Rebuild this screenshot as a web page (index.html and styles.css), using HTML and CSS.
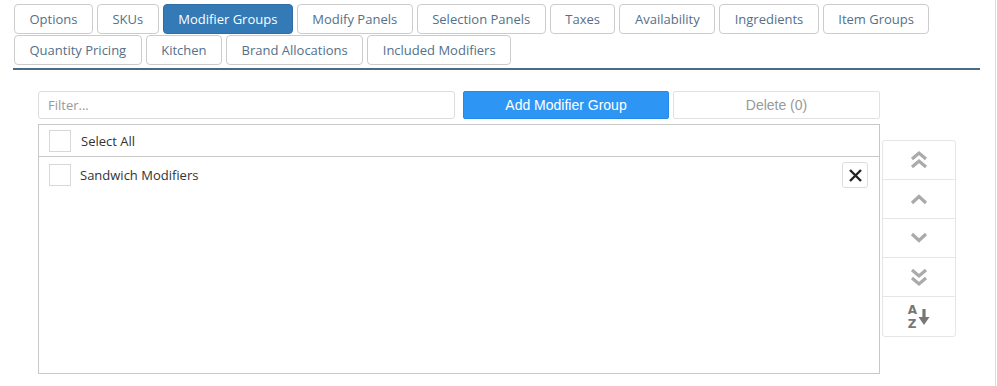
FILE: index.html
```html
<!DOCTYPE html>
<html lang="en">
<head>
	<meta charset="UTF-8">
	<title>Item - Modifier Groups</title>
	<link rel="stylesheet" href="styles.css">
</head>
<body>

<div class="page">
	<!-- tabs -->
	<div class="tabs">
		<a class="tab">Options</a>
		<a class="tab">SKUs</a>
		<a class="tab current">Modifier Groups</a>
		<a class="tab">Modify Panels</a>
		<a class="tab">Selection Panels</a>
		<a class="tab">Taxes</a>
		<a class="tab">Availability</a>
		<a class="tab">Ingredients</a>
		<a class="tab">Item Groups</a>
		<a class="tab">Quantity Pricing</a>
		<a class="tab">Kitchen</a>
		<a class="tab">Brand Allocations</a>
		<a class="tab">Included Modifiers</a>
	</div>
	<div class="tab-line"></div>

	<div class="panel">
		<div class="toolbar">
			<input class="filter" type="text" placeholder="Filter...">
			<button class="btn btn-add">Add Modifier Group</button>
			<button class="btn btn-delete">Delete (0)</button>
		</div>

		<div class="list-wrap">
			<div class="list">
				<div class="row row-head">
					<span class="check"></span>
					<span class="label">Select All</span>
				</div>
				<div class="row">
					<span class="check"></span>
					<span class="label">Sandwich Modifiers</span>
					<span class="remove">
						<svg width="15" height="15" viewBox="0 0 15 15"><path d="M2 2 L13 13 M13 2 L2 13" stroke="#222" stroke-width="2.4" fill="none"/></svg>
					</span>
				</div>
			</div>

			<div class="order">
				<div class="order-btn">
					<svg width="20" height="20" viewBox="0 0 20 20"><path d="M3 9 L10 3 L17 9 M3 17 L10 11 L17 17" stroke="#aaa" stroke-width="3.2" fill="none"/></svg>
				</div>
				<div class="order-btn">
					<svg width="20" height="12" viewBox="0 0 20 12"><path d="M3 10 L10 3.5 L17 10" stroke="#aaa" stroke-width="3.2" fill="none"/></svg>
				</div>
				<div class="order-btn">
					<svg width="20" height="12" viewBox="0 0 20 12"><path d="M3 2 L10 8.5 L17 2" stroke="#aaa" stroke-width="3.2" fill="none"/></svg>
				</div>
				<div class="order-btn">
					<svg width="20" height="20" viewBox="0 0 20 20"><path d="M3 3 L10 9 L17 3 M3 11 L10 17 L17 11" stroke="#aaa" stroke-width="3.2" fill="none"/></svg>
				</div>
				<div class="order-btn sort">
					<span class="az"><span>A</span><span>Z</span></span>
					<svg width="12" height="18" viewBox="0 0 12 18"><path d="M6 1 L6 12" stroke="#777" stroke-width="3.2" fill="none"/><path d="M0.5 9 L11.5 9 L6 17 Z" fill="#777"/></svg>
				</div>
			</div>
		</div>
	</div>
</div>

</body>
</html>
```

FILE: styles.css
```css
*{margin: 0;padding: 0;box-sizing: border-box;}
body{
	background: #fff;
	font-family: "Open Sans", "Noto Sans", sans-serif;
	font-size: 13px;
	color: #333;
}
.page{
	width: 996px;
	height: 386px;
	border-right: 1px solid #ddd;
	padding-top: 4px;
}
/*标签*/
.tabs{
	display: flex;
	flex-wrap: wrap;
	gap: 1px 4px;
	padding-left: 14px;
	width: 960px;
}
.tab{
	display: block;
	height: 30px;
	line-height: 28px;
	padding: 0 14.5px;
	border: 1px solid #ccc;
	border-radius: 4px;
	color: #53708a;
	background: #fff;
	cursor: pointer;
}
.tab.current{
	background: #337ab7;
	border-color: #2e6da4;
	color: #fff;
}
.tab-line{
	margin: 3px 0 0 13px;
	width: 967px;
	height: 2px;
	background: #4b6a83;
}
/*内容*/
.panel{
	padding: 21px 0 0 38px;
}
.toolbar{
	display: flex;
	height: 28px;
}
.filter{
	width: 417px;
	height: 28px;
	border: 1px solid #ddd;
	border-radius: 3px;
	padding: 0 9px;
	font-family: "Open Sans", sans-serif;
	font-size: 13px;
	color: #333;
	outline: none;
}
.filter::placeholder{color: #999;}
.btn{
	height: 28px;
	font-family: "Liberation Sans", Arial, sans-serif;
	font-size: 14px;
	border-radius: 2px;
	cursor: pointer;
}
.btn-add{
	width: 206px;
	margin-left: 8px;
	background: #2d96f5;
	border: 1px solid #2589e6;
	color: #fff;
}
.btn-delete{
	width: 207px;
	margin-left: 4px;
	background: #fff;
	border: 1px solid #e2e2e2;
	color: #999;
}
.list-wrap{
	display: flex;
	margin-top: 5px;
}
.list{
	width: 842px;
	height: 250px;
	border: 1px solid #c8c8c8;
}
.row{
	display: flex;
	align-items: center;
	height: 36px;
	padding: 0 11px 0 10px;
}
.row-head{
	height: 32px;
	border-bottom: 1px solid #c8c8c8;
}
.check{
	width: 22px;
	height: 22px;
	border: 1px solid #d8d8d8;
	background: #fff;
}
.label{
	margin-left: 9px;
	flex: 1;
	color: #333;
}
.row-head .label{margin-left: 10px;}
.remove{
	display: flex;
	align-items: center;
	justify-content: center;
	width: 26px;
	height: 26px;
	border: 1px solid #ddd;
	border-radius: 3px;
}
/*排序按钮*/
.order{
	margin: 16px 0 0 2px;
	width: 74px;
	border: 1px solid #e6e6e6;
	border-radius: 3px;
	align-self: flex-start;
}
.order-btn{
	display: flex;
	align-items: center;
	justify-content: center;
	height: 39px;
	border-bottom: 1px solid #e6e6e6;
}
.order-btn:last-child{border-bottom: none;}
.sort{gap: 1px;}
.az{
	display: flex;
	flex-direction: column;
	font-family: "DejaVu Sans", sans-serif;
	font-weight: bold;
	font-size: 12px;
	line-height: 14px;
	color: #777;
}
```
